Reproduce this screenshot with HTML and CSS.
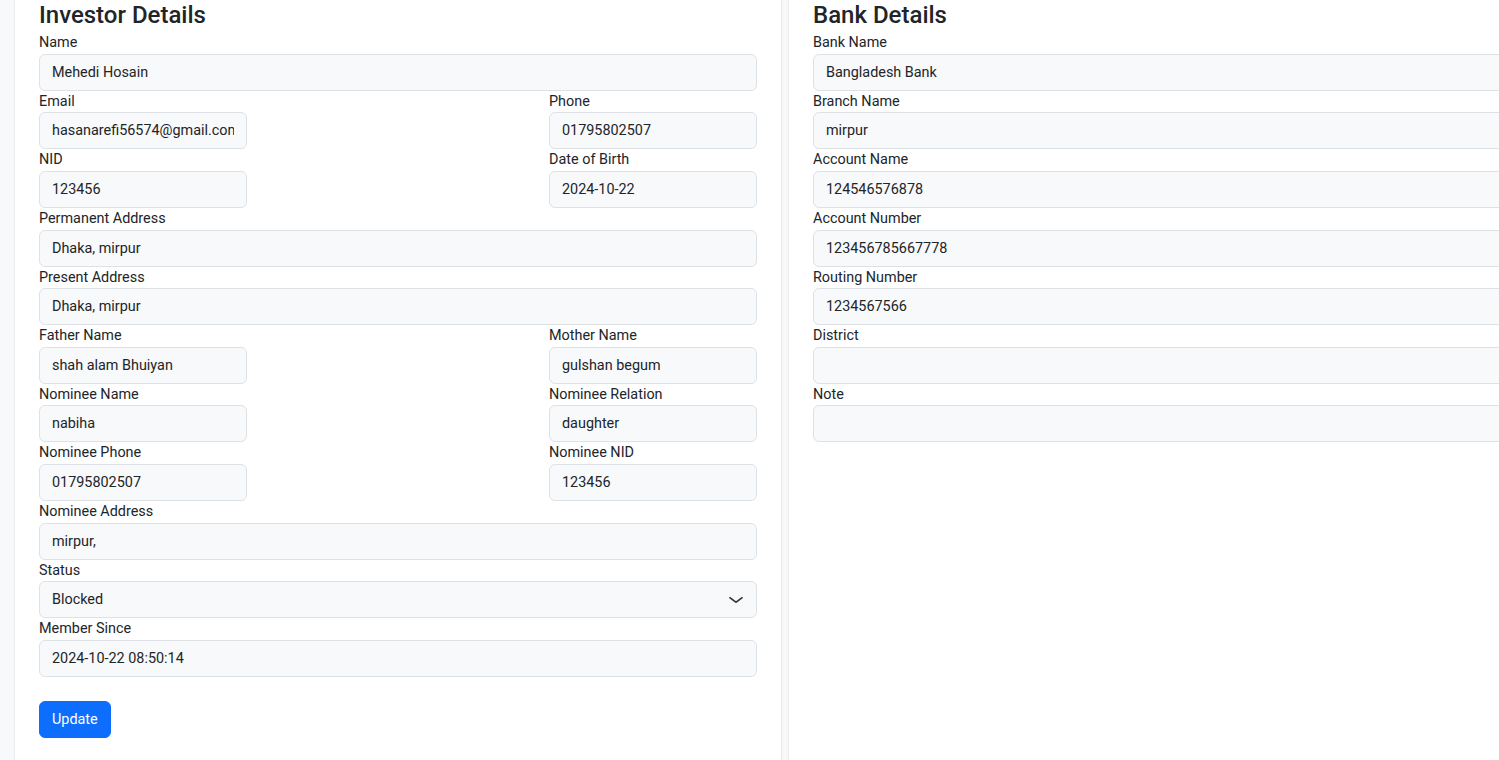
FILE: index.html
```html
<!DOCTYPE html>
<html lang="en">
<head>
<meta charset="utf-8">
<title>Investor</title>
<link rel="stylesheet" href="styles.css">
</head>
<body>
<div class="viewport">
<div class="page">
  <section class="card">
    <h3 class="title">Investor Details</h3>
    <div class="field">
      <label>Name</label>
      <div class="input"><span class="val">Mehedi Hosain</span></div>
    </div>
    <div class="pair">
      <div class="field half"><label>Email</label><div class="input"><span class="val">hasanarefi56574@gmail.com</span></div></div>
      <div class="field half"><label>Phone</label><div class="input"><span class="val">01795802507</span></div></div>
    </div>
    <div class="pair">
      <div class="field half"><label>NID</label><div class="input"><span class="val">123456</span></div></div>
      <div class="field half"><label>Date of Birth</label><div class="input"><span class="val">2024-10-22</span></div></div>
    </div>
    <div class="field"><label>Permanent Address</label><div class="input"><span class="val">Dhaka, mirpur</span></div></div>
    <div class="field"><label>Present Address</label><div class="input"><span class="val">Dhaka, mirpur</span></div></div>
    <div class="pair">
      <div class="field half"><label>Father Name</label><div class="input"><span class="val">shah alam Bhuiyan</span></div></div>
      <div class="field half"><label>Mother Name</label><div class="input"><span class="val">gulshan begum</span></div></div>
    </div>
    <div class="pair">
      <div class="field half"><label>Nominee Name</label><div class="input"><span class="val">nabiha</span></div></div>
      <div class="field half"><label>Nominee Relation</label><div class="input"><span class="val">daughter</span></div></div>
    </div>
    <div class="pair">
      <div class="field half"><label>Nominee Phone</label><div class="input"><span class="val">01795802507</span></div></div>
      <div class="field half"><label>Nominee NID</label><div class="input"><span class="val">123456</span></div></div>
    </div>
    <div class="field"><label>Nominee Address</label><div class="input"><span class="val">mirpur,</span></div></div>
    <div class="field"><label>Status</label>
      <div class="input select"><span class="val">Blocked</span>
        <svg class="chev" width="16" height="12" viewBox="0 0 16 16" preserveAspectRatio="none"><path d="m2 5 6 6 6-6" fill="none" stroke="#343a40" stroke-width="2" stroke-linecap="round" stroke-linejoin="round"/></svg>
      </div>
    </div>
    <div class="field"><label>Member Since</label><div class="input"><span class="val">2024-10-22 08:50:14</span></div></div>
    <button class="btn">Update</button>
  </section>
  <section class="card">
    <h3 class="title">Bank Details</h3>
    <div class="field"><label>Bank Name</label><div class="input"><span class="val">Bangladesh Bank</span></div></div>
    <div class="field"><label>Branch Name</label><div class="input"><span class="val">mirpur</span></div></div>
    <div class="field"><label>Account Name</label><div class="input"><span class="val">124546576878</span></div></div>
    <div class="field"><label>Account Number</label><div class="input"><span class="val">123456785667778</span></div></div>
    <div class="field"><label>Routing Number</label><div class="input"><span class="val">1234567566</span></div></div>
    <div class="field"><label>District</label><div class="input"></div></div>
    <div class="field"><label>Note</label><div class="input"></div></div>
  </section>
</div>
</div>
</body>
</html>
```
FILE: styles.css
```css
html, body {
  margin: 0;
  padding: 0;
  background: #f8f9fa;
  font-family: Roboto, "Liberation Sans", sans-serif;
  color: #212529;
}
.viewport {
  width: 1499px;
  height: 760px;
  overflow: hidden;
}
.page {
  display: flex;
  gap: 6px;
  padding-left: 14px;
  margin-top: -23.6px;
  align-items: flex-start;
}
.card {
  flex: 0 0 768px;
  box-sizing: border-box;
  background: #fff;
  border: 1px solid #eceef0;
  border-radius: 6px;
  box-shadow: 0 1px 3px rgba(0,0,0,.04);
  padding: 24px;
  min-height: 820px;
}
.title {
  margin: 0 0 2px;
  font-size: 24px;
  font-weight: 500;
  line-height: 28.8px;
  color: #212529;
}
.field {
  display: flex;
  flex-direction: column;
}
.field label {
  font-size: 14.4px;
  line-height: 21.6px;
  height: 21.6px;
  display: block;
}
.pair {
  display: flex;
  justify-content: space-between;
}
.half {
  width: 208px;
}
.input {
  box-sizing: border-box;
  height: 37px;
  padding: 7px 12px;
  font-size: 14.4px;
  line-height: 21px;
  background: #f8f9fa;
  border: 1px solid #dee2e6;
  border-radius: 6px;
  white-space: nowrap;
  color: #212529;
}
.val {
  display: block;
  overflow: hidden;
  white-space: nowrap;
}
.select {
  display: flex;
  align-items: center;
  justify-content: space-between;
  padding-right: 12px;
}
.chev {
  display: block;
}
.btn {
  margin-top: 24px;
  height: 37px;
  padding: 0 12px;
  font-family: inherit;
  font-size: 14.4px;
  color: #fff;
  background: #0d6efd;
  border: 1px solid #0d6efd;
  border-radius: 6px;
}
```
